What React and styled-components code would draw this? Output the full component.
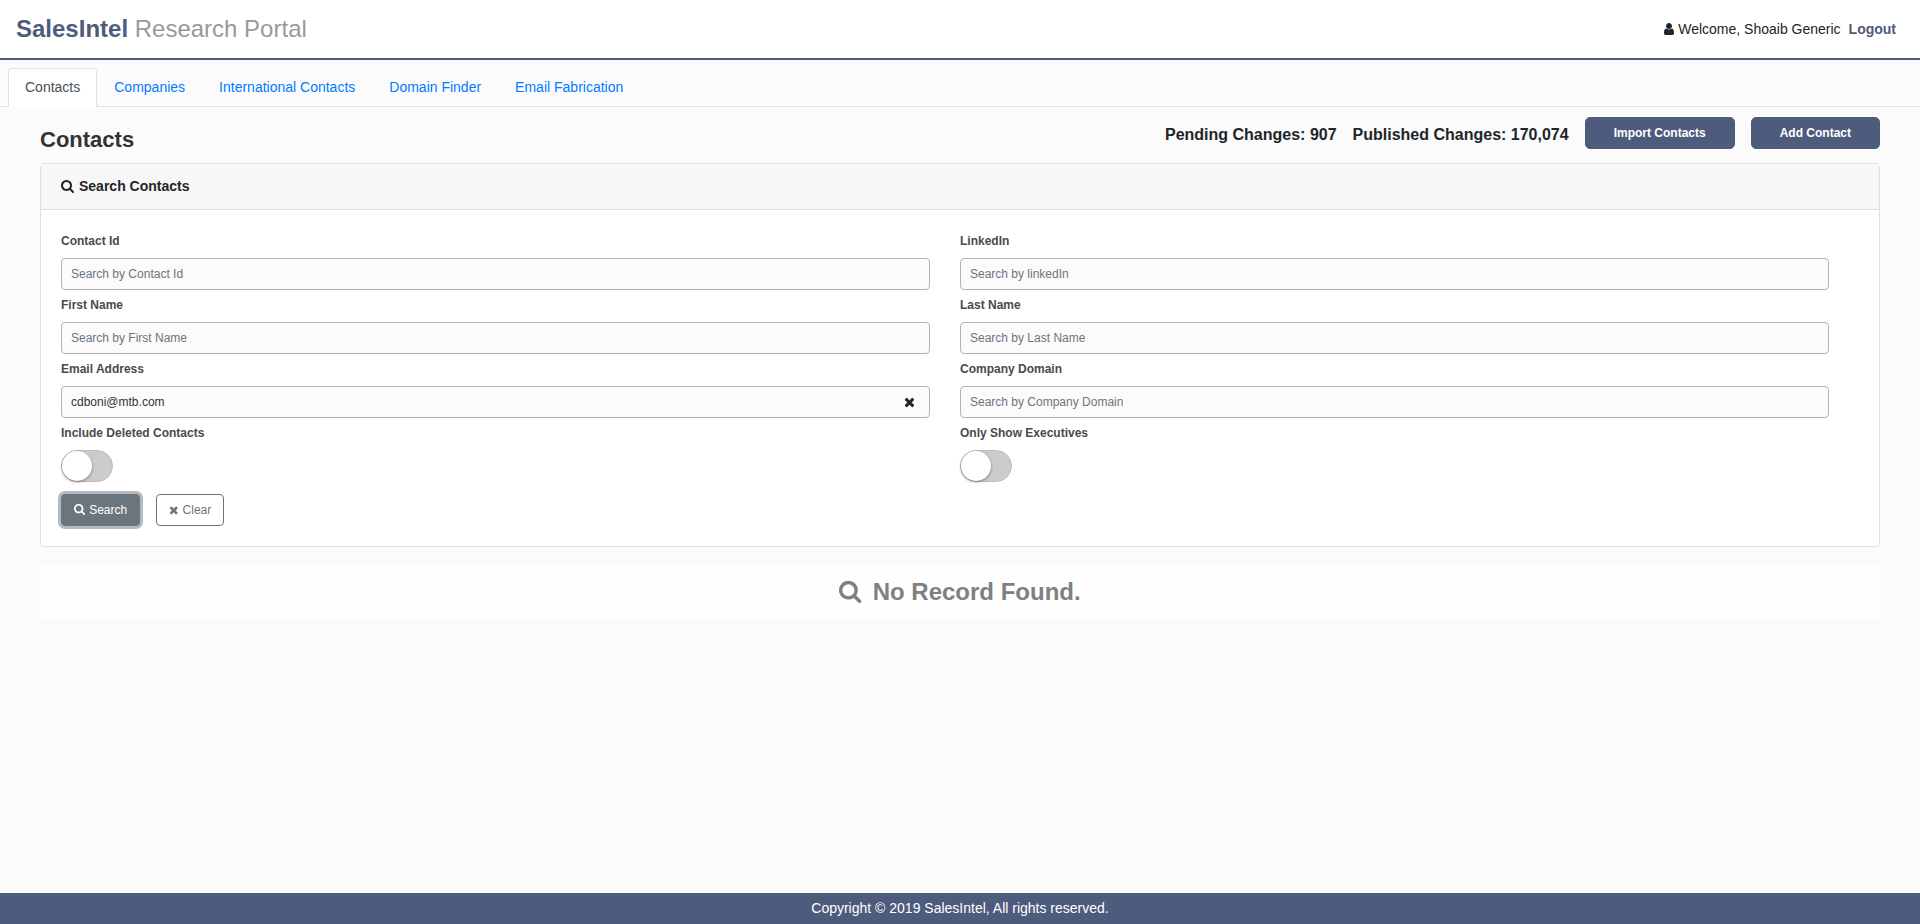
import React, { useState } from 'react';
import styled, { createGlobalStyle, css } from 'styled-components';

const navy = '#4d5b7c';

const GlobalStyle = createGlobalStyle`
  *, *::before, *::after { box-sizing: border-box; }
  body {
    margin: 0;
    background: #fbfbfb;
    color: #212529;
    font-family: "Liberation Sans", Arial, sans-serif;
    font-size: 14px;
    line-height: 21px;
  }
  button, input { font-family: inherit; }
`;

const glyphs = {
  search: {
    box: '64 0 1664 1792',
    ratio: 1664 / 1792,
    lift: 2,
    d: 'M1216 832q0-185-131.5-316.5t-316.5-131.5-316.5 131.5-131.5 316.5 131.5 316.5 316.5 131.5 316.5-131.5 131.5-316.5zm512 832q0 52-38 90t-90 38q-54 0-90-38l-343-342q-179 124-399 124-143 0-273.5-55.5t-225-150-150-225-55.5-273.5 55.5-273.5 150-225 225-150 273.5-55.5 273.5 55.5 225 150 150 225 55.5 273.5q0 220-124 399l343 343q37 37 37 90z',
  },
  times: {
    box: '192 0 1408 1792',
    ratio: 1408 / 1792,
    lift: 0,
    d: 'M1490 1322q0 40-28 68l-136 136q-28 28-68 28t-68-28l-294-294-294 294q-28 28-68 28t-68-28l-136-136q-28-28-28-68t28-68l294-294-294-294q-28-28-28-68t28-68l136-136q28-28 68-28t68 28l294 294 294-294q28-28 68-28t68 28l136 136q28 28 28 68t-28 68l-294 294 294 294q28 28 28 68z',
  },
  user: {
    box: '256 0 1280 1792',
    ratio: 1280 / 1792,
    lift: 0,
    d: 'M1536 1399q0 109-62.5 187t-150.5 78h-854q-88 0-150.5-78t-62.5-187q0-85 8.5-160.5t31.5-152 58.5-131 94-89 134.5-34.5q131 128 313 128t313-128q76 0 134.5 34.5t94 89 58.5 131 31.5 152 8.5 160.5zm-256-887q0 159-112.5 271.5t-271.5 112.5-271.5-112.5-112.5-271.5 112.5-271.5 271.5-112.5 271.5 112.5 112.5 271.5z',
  },
};

const Glyph = styled.svg`
  flex: none;
  margin-bottom: ${({ $lift }) => $lift}px;
  fill: currentColor;
`;

function Icon({ name, size = 14 }) {
  const g = glyphs[name];
  return (
    <Glyph viewBox={g.box} width={size * g.ratio} height={size} $lift={g.lift} aria-hidden="true">
      <path d={g.d} />
    </Glyph>
  );
}

const Page = styled.div`
  display: flex;
  flex-direction: column;
  min-height: 100vh;
`;

const TopBar = styled.header`
  display: flex;
  align-items: center;
  justify-content: space-between;
  padding: 11px 24px 11px 16px;
  background: #fff;
  border-bottom: 2px solid ${navy};
`;

const Brand = styled.div`
  font-size: 24px;
  line-height: 36px;
  color: #999;

  strong { color: ${navy}; }
`;

const Account = styled.div`
  display: flex;
  align-items: center;
  gap: 4px;
`;

const LogoutLink = styled.a`
  margin-left: 4px;
  color: ${navy};
  font-weight: bold;
  text-decoration: none;
`;

const Tabs = styled.nav`
  display: flex;
  padding: 8px 8px 0;
  border-bottom: 1px solid #dee2e6;
`;

const Tab = styled.a`
  margin-bottom: -1px;
  padding: 8px 16px;
  border: 1px solid transparent;
  border-radius: 4px 4px 0 0;
  color: #007bff;
  text-decoration: none;

  ${({ $active }) => $active && css`
    color: #495057;
    background: #fff;
    border-color: #dee2e6 #dee2e6 #fff;
  `}
`;

const Main = styled.main`
  flex: 1;
  padding: 10px 40px 24px;
`;

const TitleRow = styled.div`
  display: flex;
  justify-content: space-between;
  align-items: flex-end;
  padding-bottom: 10px;
`;

const Title = styled.h1`
  margin: 0;
  color: #333;
  font-size: 22px;
  line-height: 26px;
`;

const Actions = styled.div`
  display: flex;
  gap: 16px;
  padding-bottom: 4px;
`;

const Stat = styled.span`
  padding-top: 6px;
  font-size: 16px;
  font-weight: bold;
  line-height: 24px;
`;

const PrimaryButton = styled.button`
  height: 32px;
  padding: 0 28px;
  border: 1px solid ${navy};
  border-radius: 5px;
  background: ${navy};
  color: #fff;
  font-size: 12px;
  font-weight: bold;
`;

const Card = styled.section`
  border: 1px solid #dfdfdf;
  border-radius: 4px;
  background: #fff;
`;

const CardHeader = styled.h2`
  display: flex;
  align-items: center;
  gap: 5px;
  margin: 0;
  padding: 12px 20px;
  border-bottom: 1px solid #dfdfdf;
  border-radius: 3px 3px 0 0;
  background: #f7f7f7;
  font-size: 14px;
  line-height: 21px;
`;

const SearchForm = styled.form`
  padding: 22px 20px 20px;
`;

const Fields = styled.div`
  display: grid;
  grid-template-columns: 1fr 1fr;
  row-gap: 6px;
`;

const Field = styled.div`
  padding-right: 30px;
`;

const FieldLabel = styled.label`
  display: block;
  width: fit-content;
  margin-bottom: 8px;
  color: #4a4a4a;
  font-size: 12px;
  font-weight: bold;
  line-height: 18px;
`;

const InputWrap = styled.div`
  position: relative;
`;

const TextInput = styled.input`
  display: block;
  width: 100%;
  height: 32px;
  padding: 0 9px;
  border: 1px solid #b3b3b3;
  border-radius: 4px;
  background: #fbfbfb;
  color: #333;
  font-size: 12px;

  &::placeholder { color: #6c757d; opacity: 1; }
`;

const ClearInput = styled.button`
  position: absolute;
  top: 0;
  right: 15px;
  display: flex;
  align-items: center;
  height: 100%;
  padding: 0;
  border: 0;
  background: none;
  color: #212529;
`;

const Switch = styled.input.attrs({ type: 'checkbox', role: 'switch' })`
  appearance: none;
  display: block;
  width: 52px;
  height: 32px;
  margin: 0;
  padding: 0;
  border: 1px solid #bdbdbd;
  border-radius: 16px;
  background: #ccc;

  &::before {
    content: "";
    display: block;
    width: 30px;
    height: 30px;
    border-radius: 50%;
    background: #fff;
    box-shadow: 0 1px 3px rgba(0, 0, 0, 0.4);
  }

  &:checked { background: ${navy}; }
  &:checked::before { margin-left: 20px; }
`;

const FormActions = styled.div`
  display: flex;
  gap: 16px;
  padding-top: 12px;
`;

const FormButton = styled.button`
  display: flex;
  align-items: center;
  gap: 4px;
  height: 32px;
  padding: 0 12px;
  border: 1px solid #6c757d;
  border-radius: 4px;
  background: ${({ $filled }) => ($filled ? '#6c757d' : '#fff')};
  color: ${({ $filled }) => ($filled ? '#fff' : '#6c757d')};
  box-shadow: ${({ $filled }) => ($filled ? '0 0 0 3px rgba(108, 117, 125, 0.5)' : 'none')};
  font-size: 12px;
`;

const EmptyState = styled.p`
  display: flex;
  align-items: center;
  justify-content: center;
  gap: 11px;
  margin: 18px 0 0;
  padding: 9px;
  border-radius: 4px;
  background: #fefefe;
  color: #808080;
  font-size: 24px;
  font-weight: bold;
  line-height: 36px;
`;

const Footer = styled.footer`
  padding: 5px;
  background: ${navy};
  color: #fff;
  text-align: center;
`;

const tabs = ['Contacts', 'Companies', 'International Contacts', 'Domain Finder', 'Email Fabrication'];

const fields = [
  { id: 'contactId', label: 'Contact Id', hint: 'Search by Contact Id' },
  { id: 'linkedin', label: 'LinkedIn', hint: 'Search by linkedIn' },
  { id: 'firstName', label: 'First Name', hint: 'Search by First Name' },
  { id: 'lastName', label: 'Last Name', hint: 'Search by Last Name' },
  { id: 'email', label: 'Email Address', hint: 'Search by Email Address' },
  { id: 'domain', label: 'Company Domain', hint: 'Search by Company Domain' },
];

const switches = [
  { id: 'deleted', label: 'Include Deleted Contacts' },
  { id: 'executives', label: 'Only Show Executives' },
];

export default function App() {
  const [values, setValues] = useState({ email: 'cdboni@mtb.com' });
  const update = (id, value) => setValues((v) => ({ ...v, [id]: value }));

  return (
    <Page>
      <GlobalStyle />
      <TopBar>
        <Brand><strong>SalesIntel</strong> Research Portal</Brand>
        <Account>
          <Icon name="user" />
          <span>Welcome, Shoaib Generic</span>
          <LogoutLink href="#logout">Logout</LogoutLink>
        </Account>
      </TopBar>
      <Tabs>
        {tabs.map((name, i) => (
          <Tab key={name} href="#" $active={i === 0}>{name}</Tab>
        ))}
      </Tabs>
      <Main>
        <TitleRow>
          <Title>Contacts</Title>
          <Actions>
            <Stat>Pending Changes: 907</Stat>
            <Stat>Published Changes: 170,074</Stat>
            <PrimaryButton type="button">Import Contacts</PrimaryButton>
            <PrimaryButton type="button">Add Contact</PrimaryButton>
          </Actions>
        </TitleRow>
        <Card>
          <CardHeader><Icon name="search" />Search Contacts</CardHeader>
          <SearchForm onSubmit={(e) => e.preventDefault()}>
            <Fields>
              {fields.map(({ id, label, hint }) => (
                <Field key={id}>
                  <FieldLabel htmlFor={id}>{label}</FieldLabel>
                  <InputWrap>
                    <TextInput
                      id={id}
                      type="text"
                      placeholder={hint}
                      value={values[id] || ''}
                      onChange={(e) => update(id, e.target.value)}
                    />
                    {values[id] && (
                      <ClearInput type="button" aria-label={`Clear ${label}`} onClick={() => update(id, '')}>
                        <Icon name="times" />
                      </ClearInput>
                    )}
                  </InputWrap>
                </Field>
              ))}
              {switches.map(({ id, label }) => (
                <Field key={id}>
                  <FieldLabel htmlFor={id}>{label}</FieldLabel>
                  <Switch id={id} />
                </Field>
              ))}
            </Fields>
            <FormActions>
              <FormButton type="submit" $filled><Icon name="search" size={12} />Search</FormButton>
              <FormButton type="button" onClick={() => setValues({})}><Icon name="times" size={12} />Clear</FormButton>
            </FormActions>
          </SearchForm>
        </Card>
        <EmptyState><Icon name="search" size={24} />No Record Found.</EmptyState>
      </Main>
      <Footer>Copyright © 2019 SalesIntel, All rights reserved.</Footer>
    </Page>
  );
}
